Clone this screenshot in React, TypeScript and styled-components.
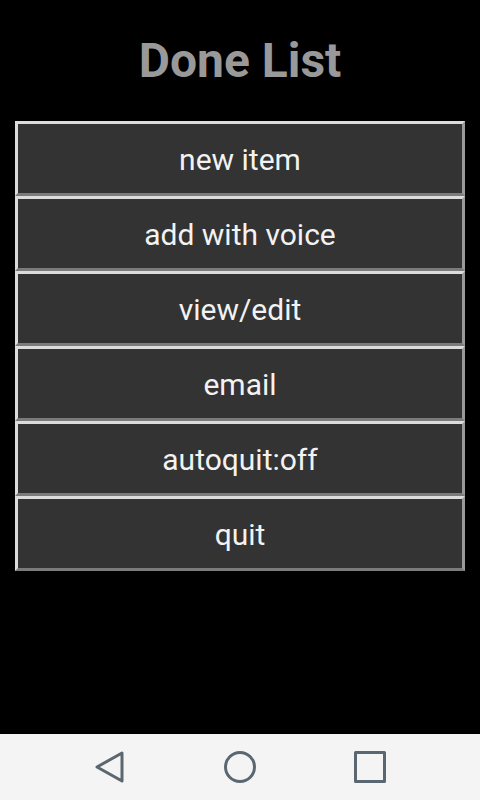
import { createGlobalStyle, styled } from 'styled-components';

const ITEMS = ['new item', 'add with voice', 'view/edit', 'email', 'autoquit:off', 'quit'];

const GlobalStyle = createGlobalStyle`
  html, body {
    margin: 0;
    padding: 0;
    background: #000;
  }
  body {
    font-family: Roboto, 'Liberation Sans', sans-serif;
  }
`;

const App = () => {
  return (
    <Screen>
      <GlobalStyle />
      <Content>
        <Title>Done List</Title>
        <MenuList>
          {ITEMS.map(label => (
            <MenuButton key={label}>{label}</MenuButton>
          ))}
        </MenuList>
      </Content>
      <NavBar>
        <NavIcon viewBox="0 0 32 32">
          <path d="M28 2 L3 16 L28 30 Z" />
        </NavIcon>
        <NavIcon viewBox="0 0 32 32">
          <circle cx="16" cy="16" r="14.5" />
        </NavIcon>
        <NavIcon viewBox="0 0 32 32">
          <rect x="1.5" y="1.5" width="29" height="29" />
        </NavIcon>
      </NavBar>
    </Screen>
  );
};

export default App;

const Screen = styled.div`
  display: flex;
  flex-direction: column;
  width: 480px;
  height: 800px;
  background: #000;
`;

const Content = styled.div`
  flex: 1;
  display: flex;
  flex-direction: column;
`;

const Title = styled.h1`
  margin: 0;
  height: 121px;
  display: flex;
  align-items: center;
  justify-content: center;
  font-size: 48px;
  font-weight: 700;
  line-height: 1;
  color: #999999;
  padding-top: 1px;
  box-sizing: border-box;
`;

const MenuList = styled.div`
  display: flex;
  flex-direction: column;
  padding: 0 15px;
`;

const MenuButton = styled.button`
  height: 75px;
  box-sizing: border-box;
  margin: 0;
  padding: 2px 0 0;
  background: #333333;
  border-style: solid;
  border-width: 3px;
  border-color: #dcdcdc #9a9a9a #7b7b7b #dcdcdc;
  color: #f2f2f2;
  font-family: Roboto, 'Liberation Sans', sans-serif;
  font-size: 30px;
  font-weight: 400;
  text-align: center;
`;

const NavBar = styled.div`
  height: 66px;
  background: #f4f4f4;
  display: flex;
  align-items: center;
  justify-content: space-between;
  padding: 0 94px;
`;

const NavIcon = styled.svg`
  width: 32px;
  height: 32px;
  fill: none;
  stroke: #5b6770;
  stroke-width: 3;
  stroke-linejoin: round;
`;
